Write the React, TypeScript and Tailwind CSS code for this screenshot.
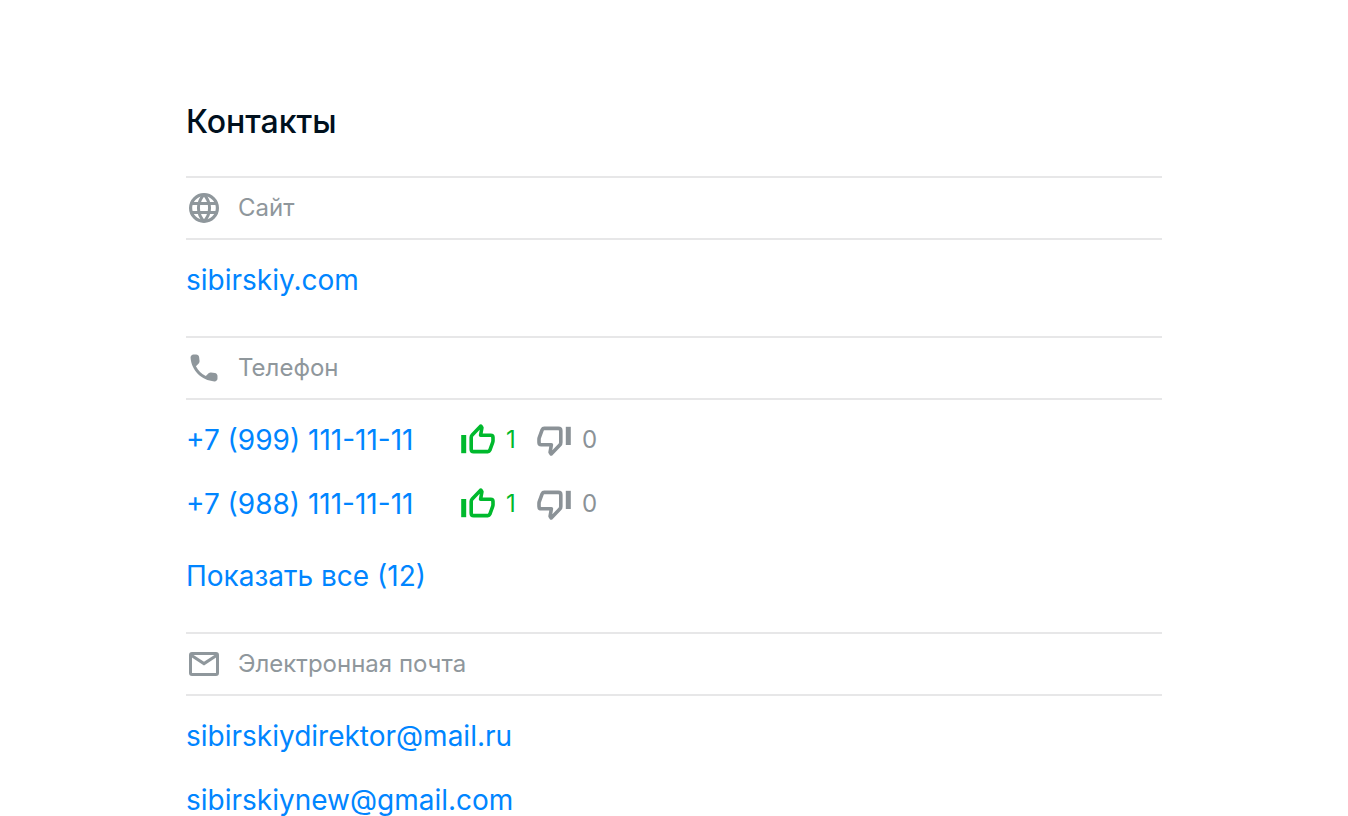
import type { ReactNode } from "react";

const phones = [
  { number: "+7 (999) 111-11-11", likes: 1, dislikes: 0 },
  { number: "+7 (988) 111-11-11", likes: 1, dislikes: 0 },
];

const emails = ["sibirskiydirektor@mail.ru", "sibirskiynew@gmail.com"];

function Globe() {
  return (
    <svg viewBox="0 0 36 36" className="size-9" fill="none" stroke="currentColor" strokeWidth="3" aria-hidden="true">
      <circle cx="18" cy="18" r="13.4" strokeWidth="3.2" />
      <path d="M5.5 13.4H30.5M5.5 22.6H30.5M18 4.6C10.6 12.6 10.6 23.4 18 31.4M18 4.6C25.4 12.6 25.4 23.4 18 31.4" />
    </svg>
  );
}

function Phone() {
  return (
    <svg viewBox="0 0 24 24" className="size-9" fill="currentColor" aria-hidden="true">
      <path d="M19.23 15.26l-2.54-.29c-.61-.07-1.21.14-1.64.57l-1.84 1.84c-2.83-1.44-5.15-3.75-6.59-6.59l1.85-1.85c.43-.43.64-1.03.57-1.64l-.29-2.52c-.12-1.01-.97-1.77-1.99-1.77H5.03c-1.13 0-2.07.94-2 2.07.53 8.54 7.36 15.36 15.89 15.89 1.13.07 2.07-.87 2.07-2v-1.73c.01-1.01-.75-1.86-1.76-1.98z" />
    </svg>
  );
}

function Mail() {
  return (
    <svg viewBox="0 0 36 36" className="size-9" fill="none" stroke="currentColor" strokeWidth="3" aria-hidden="true">
      <rect x="4.5" y="7.5" width="27" height="21" rx="1.5" />
      <path d="M4.8 9L18 17.6L31.2 9" />
    </svg>
  );
}

function Thumb({ className }: { className?: string }) {
  return (
    <svg viewBox="0 0 36 36" className={`size-9 ${className ?? ""}`} fill="none" aria-hidden="true">
      <path d="M1.2 13H6.2V31.2H1.2Z" fill="currentColor" />
      <path
        d="M11.2 15.6V27.2Q11.2 29.6 13.6 29.6H27.8Q29.2 29.6 29.8 28.3L32.7 20.4Q33 19.6 33 18.8V15.4Q33 13.2 30.8 13.2H20.6L21.9 5.8L20.8 4.1L12.2 12.9Q11.2 13.9 11.2 15.6Z"
        stroke="currentColor"
        strokeWidth="3.6"
        strokeLinejoin="round"
      />
    </svg>
  );
}

function Section({ icon, title, children }: { icon: ReactNode; title: string; children: ReactNode }) {
  return (
    <section>
      <h2 className="flex h-16 items-center gap-4 border-y-2 border-[#e7e7e8] text-2xl text-[#8f979c]">
        {icon}
        {title}
      </h2>
      {children}
    </section>
  );
}

export default function App() {
  return (
    <main className="mx-auto max-w-[976px] bg-white pt-24 font-['Inter',sans-serif] text-[28px] leading-8 text-[#0085ff]">
      <h1 className="mb-7.5 pt-0.5 text-[32px] leading-12 font-medium text-[#00101d]">Контакты</h1>

      <Section icon={<Globe />} title="Сайт">
        <a href="#site" className="mt-6 mb-10 block">
          sibirskiy.com
        </a>
      </Section>

      <Section icon={<Phone />} title="Телефон">
        <ul className="mt-6 flex flex-col gap-8">
          {phones.map((phone) => (
            <li key={phone.number} className="flex h-8 items-center">
              <a href="#phone" className="w-[274px]">
                {phone.number}
              </a>
              <button aria-label="Нравится" className="flex w-[76px] items-center gap-2.5 text-2xl text-[#00b92d]">
                <Thumb />
                {phone.likes}
              </button>
              <button aria-label="Не нравится" className="flex items-center gap-2.5 text-2xl text-[#8b9297]">
                <Thumb className="rotate-180" />
                {phone.dislikes}
              </button>
            </li>
          ))}
        </ul>
        <button className="mt-10 mb-10 block">Показать все (12)</button>
      </Section>

      <Section icon={<Mail />} title="Электронная почта">
        <ul className="mt-6 flex flex-col gap-8">
          {emails.map((email) => (
            <li key={email}>
              <a href={`mailto:${email}`}>{email}</a>
            </li>
          ))}
        </ul>
      </Section>
    </main>
  );
}
